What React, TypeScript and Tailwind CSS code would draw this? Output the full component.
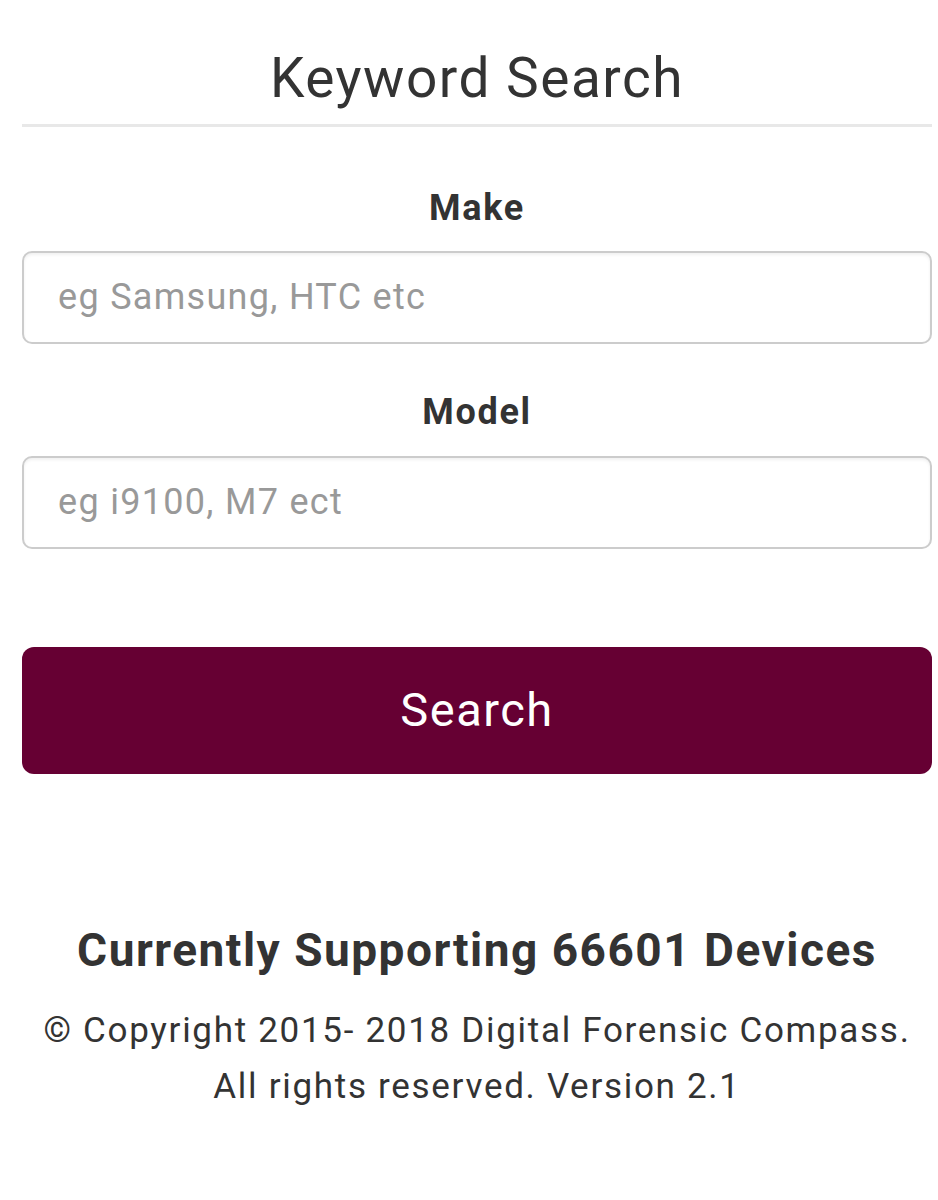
export default function App() {
  return (
    <div className="min-h-screen bg-white pl-[22px] pr-[6px] text-[#333] font-['Roboto',sans-serif]">
      <h1 className="pt-[48px] pb-[15px] text-center text-[55px] leading-[1.1] tracking-[1.5px]">
        Keyword Search
      </h1>
      <div className="h-[3px] bg-[#e8e8e8]" />

      <div className="mt-[63px] text-center text-[36px] font-bold leading-none tracking-[1.7px]">
        Make
      </div>
      <input
        placeholder="eg Samsung, HTC etc"
        className="mt-[25px] block h-[93px] w-full rounded-[10px] border-2 border-[#ccc] px-[34px] text-[36px] tracking-[1.3px] text-[#555] shadow-[inset_0_2px_3px_rgba(0,0,0,0.06)] outline-none placeholder:text-[#999]"
      />

      <div className="mt-[50px] text-center text-[36px] font-bold leading-none tracking-[1.7px]">
        Model
      </div>
      <input
        placeholder="eg i9100, M7 ect"
        className="mt-[26px] block h-[93px] w-full rounded-[10px] border-2 border-[#ccc] px-[34px] text-[36px] tracking-[1.3px] text-[#555] shadow-[inset_0_2px_3px_rgba(0,0,0,0.06)] outline-none placeholder:text-[#999]"
      />

      <button className="mt-[98px] block h-[127px] w-full rounded-[12px] bg-[#660033] text-[47px] tracking-[1.5px] text-white">
        Search
      </button>

      <div className="mt-[153px] text-center text-[46px] font-bold leading-none tracking-[1.5px]">
        Currently Supporting 66601 Devices
      </div>
      <p className="mt-[30px] text-center text-[35px] leading-[56px] tracking-[1.7px]">
        © Copyright 2015- 2018 Digital Forensic Compass.
        <br />
        All rights reserved. Version 2.1
      </p>
    </div>
  );
}
